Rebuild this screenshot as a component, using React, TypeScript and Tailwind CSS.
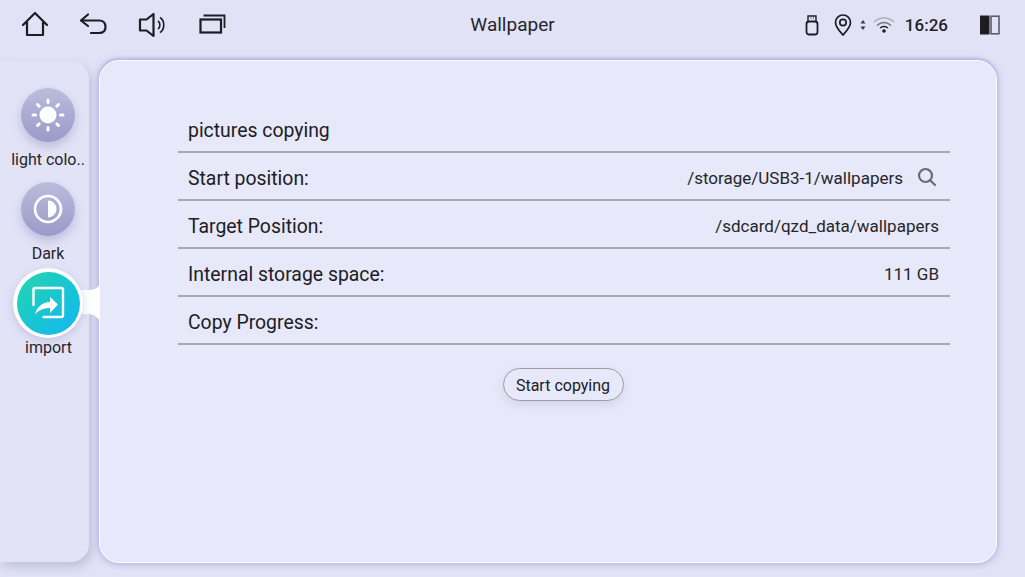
import React from "react";

const font = { fontFamily: "Roboto, sans-serif" };

function TopIcon({ children, w = 32 }: { children: React.ReactNode; w?: number }) {
  return (
    <svg width={w} height="32" viewBox={`0 0 ${w} 32`} fill="none" stroke="#1c1c22" strokeWidth="2" className="shrink-0">
      {children}
    </svg>
  );
}

function Row({ label, value, search }: { label: string; value?: string; search?: boolean }) {
  return (
    <div className="h-12 flex items-center justify-between pl-[10px] pr-[11px] pt-[5px] border-b-2 border-[#a9a9b0]">
      <span className="text-[19.4px] text-[#202024]">{label}</span>
      {value && (
        <span className="flex items-center text-[17px] text-[#26262b]">
          {value}
          {search && (
            <svg width="20" height="20" viewBox="0 0 20 20" fill="none" stroke="#6a6a72" strokeWidth="2.2" strokeLinecap="round" className="ml-[14px] mb-[3px] mr-[2px]">
              <circle cx="8.5" cy="8.5" r="6.5" />
              <path d="M13.5 13.5L18 18" />
            </svg>
          )}
        </span>
      )}
    </div>
  );
}

function SideItem({ label, children }: { label: string; children: React.ReactNode }) {
  return (
    <div className="w-[96px] h-[94px] flex flex-col items-center">
      <div className="w-[54px] h-[54px] rounded-full bg-gradient-to-b from-[#bcbcdc] to-[#9a9ac8] shadow-[0_5px_10px_rgba(120,120,170,0.35)] flex items-center justify-center">
        {children}
      </div>
      <span className="mt-[8px] text-[16px] leading-[20px] text-[#26262b] whitespace-nowrap">{label}</span>
    </div>
  );
}

export default function App() {
  return (
    <div className="w-[1025px] h-[577px] bg-[#e1e2f6] overflow-hidden flex flex-col" style={font}>
      <header className="h-[60px] flex items-center relative pb-[10px]">
        <div className="flex items-center pl-[19px]">
          <TopIcon>
            <path d="M4 16L16 4L28 16" strokeWidth="2.2" strokeLinecap="round" strokeLinejoin="round" />
            <path d="M8 13V26H24V13" strokeWidth="2.2" strokeLinejoin="round" />
          </TopIcon>
          <div className="ml-[27px]">
            <TopIcon>
              <path d="M10 5.5L3 11.5L10 17" strokeWidth="2.2" strokeLinecap="round" strokeLinejoin="round" />
              <path d="M3.5 11.5H21C25 11.5 27.5 14 27.5 18C27.5 22 25 24 21 24H13" strokeWidth="2.2" strokeLinecap="round" />
            </TopIcon>
          </div>
          <div className="ml-[28px]">
            <TopIcon>
              <path d="M2 10.5H8.5L15.5 5V27L8.5 21.5H2Z" strokeWidth="2.2" strokeLinejoin="round" />
              <path d="M20 12C22.5 13.5 22.5 18.5 20 20" strokeWidth="1.6" />
              <path d="M22 8.5C27 11.5 27 20.5 22 23.5" strokeWidth="1.6" />
            </TopIcon>
          </div>
          <div className="ml-[27px]">
            <TopIcon>
              <rect x="3.5" y="10.5" width="20.5" height="13" strokeWidth="2.2" />
              <path d="M6.5 6.5H27.5V19" strokeWidth="1.8" />
            </TopIcon>
          </div>
        </div>
        <div className="absolute left-0 right-0 top-[14px] text-center text-[19px] leading-[22px] text-[#26262b]">Wallpaper</div>
        <div className="ml-auto flex items-center pr-[25px]">
          <svg width="14" height="22" viewBox="0 0 14 22" fill="none" stroke="#1c1c22" strokeWidth="1.8">
            <rect x="1.5" y="7.5" width="11" height="13" rx="2.5" />
            <path d="M3 7.5V2H11V7.5" strokeWidth="1.4" />
            <path d="M5.5 4H6.5M8 4H9" strokeWidth="1" />
          </svg>
          <svg width="20" height="24" viewBox="0 0 20 24" fill="none" stroke="#1c1c22" strokeWidth="1.7" className="ml-[14px]">
            <path d="M10 22C6 17.5 2.5 14 2.5 9.5C2.5 5 6 2 10 2C14 2 17.5 5 17.5 9.5C17.5 14 14 17.5 10 22Z" strokeLinejoin="round" />
            <circle cx="10" cy="9.5" r="3.2" />
          </svg>
          <svg width="6" height="10" viewBox="0 0 6 10" fill="#3a3a42" className="ml-[7px]">
            <path d="M3 0L5.5 3.6H0.5Z" />
            <path d="M3 10L5.5 6.4H0.5Z" />
          </svg>
          <svg width="22" height="18" viewBox="0 0 22 18" fill="none" className="ml-[7px]">
            <path d="M1 6C7 0.5 15 0.5 21 6" stroke="#a6a6ae" strokeWidth="1.3" />
            <path d="M4 9.5C8 5.5 14 5.5 18 9.5" stroke="#77777f" strokeWidth="1.3" />
            <path d="M7 12C9.5 10 12.5 10 15 12" stroke="#1c1c22" strokeWidth="1.5" />
            <circle cx="11" cy="15" r="1.8" fill="#1c1c22" />
          </svg>
          <span className="ml-[10px] text-[17px] font-medium text-[#1f1f24] leading-[22px]">16:26</span>
          <svg width="20" height="20" viewBox="0 0 20 20" className="ml-[32px]">
            <rect x="0" y="0.5" width="9.5" height="19" fill="#1c1c22" />
            <rect x="11" y="1.2" width="8" height="17.6" fill="none" stroke="#55555c" strokeWidth="1.5" />
          </svg>
        </div>
      </header>

      <div className="flex-1 flex items-start gap-[10px] pr-[27px] relative">
        <aside className="w-[89px] h-[501px] mt-[1px] rounded-r-[18px] bg-[#e2e3f7] shadow-[3px_5px_10px_rgba(150,150,195,0.45)] flex flex-col items-start pt-[27px]">
          <SideItem label="light colo..">
            <svg width="36" height="36" viewBox="0 0 36 36" fill="white">
              <circle cx="18" cy="18" r="8.5" />
              <g stroke="white" strokeWidth="3" strokeLinecap="round">
                <path d="M18 3V5.5M18 30.5V33M3 18H5.5M30.5 18H33M7.5 7.5L9.2 9.2M26.8 26.8L28.5 28.5M28.5 7.5L26.8 9.2M9.2 26.8L7.5 28.5" />
              </g>
            </svg>
          </SideItem>
          <SideItem label="Dark">
            <svg width="30" height="30" viewBox="0 0 30 30">
              <circle cx="15" cy="15" r="13" fill="none" stroke="white" strokeWidth="2.6" />
              <path d="M15 6.5A8.5 8.5 0 0 1 15 23.5Z" fill="white" />
            </svg>
          </SideItem>
        </aside>

        {/* Selected item sits over the sidebar and joins the panel */}
        <div className="absolute left-[13px] top-[208px] w-[70px] h-[70px] rounded-full bg-white shadow-[0_3px_8px_rgba(140,140,190,0.35)] flex items-center justify-center z-20">
          <div className="w-[63px] h-[63px] rounded-full bg-gradient-to-br from-[#25d5ae] to-[#19b5f0] flex items-center justify-center">
            <svg width="34" height="34" viewBox="0 0 34 34" fill="none">
              <path d="M2.5 19V3.5C2.5 2.5 3 2 4 2H30C31 2 32 2.5 32 3.5V29.5C32 30.5 31 31 30 31H12.5" stroke="white" strokeWidth="2.4" strokeLinecap="round" />
              <path d="M4 28C6 21 11 16.5 19 16V11L27 18.5L19 27V22C13 21.5 8 24 4 28Z" fill="white" />
            </svg>
          </div>
        </div>
        <svg width="22" height="36" viewBox="0 0 22 36" className="absolute left-[78px] top-[225px] z-10">
          <path d="M0 5H10C16 5 19 3 22 0V36C19 32 16 29 10 29H0Z" fill="#ffffff" />
        </svg>
        <div className="absolute left-[25px] top-[277px] w-[46px] text-center text-[16px] leading-[20px] pt-[1px] text-[#26262b] z-20 whitespace-nowrap">import</div>

        <main className="flex-1 h-[503px] rounded-[20px] bg-[#e7e8f9] border border-white shadow-[-2px_0_6px_rgba(140,140,200,0.35),0_-2px_3px_rgba(140,140,220,0.35),2px_2px_6px_rgba(150,150,210,0.35)] pt-[44px] pl-[78px] pr-[46px] mr-[1px]">
          <Row label="pictures copying" />
          <Row label="Start position:" value="/storage/USB3-1/wallpapers" search />
          <Row label="Target Position:" value="/sdcard/qzd_data/wallpapers" />
          <Row label="Internal storage space:" value="111 GB" />
          <Row label="Copy Progress:" />
          <div className="flex justify-center mt-[23px] pr-[2px]">
            <button className="w-[121px] h-[33px] rounded-full border border-[#9d9da0] bg-[#e7e8f9] shadow-[0_4px_8px_rgba(170,170,210,0.3)] text-[16px] text-[#202024] pt-[2px]">
              Start copying
            </button>
          </div>
        </main>
      </div>
    </div>
  );
}
